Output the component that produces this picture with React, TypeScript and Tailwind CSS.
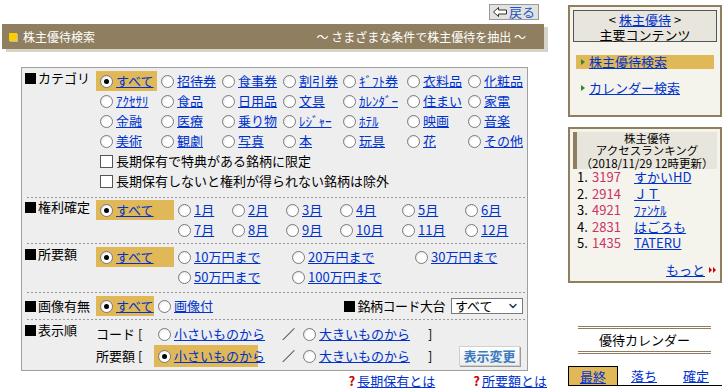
import { ChevronDown } from 'lucide-react'

const cats = [
  ['すべて', '招待券', '食事券', '割引券', 'ｷﾞﾌﾄ券', '衣料品', '化粧品'],
  ['ｱｸｾｻﾘ', '食品', '日用品', '文具', 'ｶﾚﾝﾀﾞｰ', '住まい', '家電'],
  ['金融', '医療', '乗り物', 'ﾚｼﾞｬｰ', 'ﾎﾃﾙ', '映画', '音楽'],
  ['美術', '観劇', '写真', '本', '玩具', '花', 'その他'],
]

const ranking = [
  ['1.', '3197', 'すかいHD'],
  ['2.', '2914', 'ＪＴ'],
  ['3.', '4921', 'ﾌｧﾝｹﾙ'],
  ['4.', '2831', 'はごろも'],
  ['5.', '1435', 'TATERU'],
]

function Radio({ on }: { on?: boolean }) {
  return (
    <span className="inline-flex h-[13px] w-[13px] shrink-0 items-center justify-center rounded-full border border-[#7b7b7b] bg-[radial-gradient(circle_at_60%_60%,#ffffff_45%,#d6d6d6_100%)]">
      {on && <span className="h-[5px] w-[5px] rounded-full bg-black" />}
    </span>
  )
}

function Opt({ label, on, hl }: { label: string; on?: boolean; hl?: boolean }) {
  return (
    <div
      className={`flex h-full items-center gap-[3px] whitespace-nowrap pl-[4px] ${hl ? 'bg-[#e0b858]' : ''}`}
    >
      <Radio on={on} />
      <a className="text-[#0033cc] underline">{label}</a>
    </div>
  )
}

function Square() {
  return <span className="mr-[2px] inline-block h-[11px] w-[11px] shrink-0 bg-black" />
}

function Label({ text }: { text: string }) {
  return (
    <div className="flex h-[14px] w-[71px] shrink-0 items-center whitespace-nowrap leading-[14px]">
      <Square />
      {text}
    </div>
  )
}

function Sep() {
  return <div className="mx-[2px] h-px bg-[repeating-linear-gradient(to_right,#9a9a9a_0_2px,transparent_2px_4px)]" />
}

function Check({ text }: { text: string }) {
  return (
    <div className="col-span-7 flex h-[20px] items-center gap-[3px] pl-[4px]">
      <span className="h-[13px] w-[13px] border border-[#555] bg-white" />
      <span>{text}</span>
    </div>
  )
}

function Triangle({ color }: { color: string }) {
  return (
    <svg width="4" height="6" viewBox="0 0 4 6" className="shrink-0">
      <polygon points="0,0 4,3 0,6" fill={color} />
    </svg>
  )
}

export default function App() {
  return (
    <div className="flex h-[392px] w-[726px] bg-white font-['Noto_Sans_CJK_JP',sans-serif] text-[13px] text-black">
      {/* main column */}
      <div className="w-[548px] shrink-0">
        <div className="flex h-[24px] justify-end pr-[9px] pt-[4px]">
          <div className="flex h-[16px] items-center gap-[2px] border border-[#999] bg-[#e2e2de] px-[3px] leading-[14px]">
            <svg width="14" height="10" viewBox="0 0 14 10">
              <polygon points="0.5,5 5.5,0.5 5.5,3 13.5,3 13.5,7 5.5,7 5.5,9.5" fill="#fff" stroke="#333" />
            </svg>
            <span className="text-[#2255cc]">戻る</span>
          </div>
        </div>

        <div className="ml-[2px] flex h-[25px] w-[542px] items-center justify-between bg-[#8f7f60] pl-[7px] pr-[18px] text-[12px] text-white shadow-[4px_3px_0_#d6d3c9]">
          <div className="flex items-center gap-[6px]">
            <span className="h-[8px] w-[8px] bg-[#ffcc00] shadow-[1px_1px_0_#bbb]" />
            <span>株主優待検索</span>
          </div>
          <span>～ さまざまな条件で株主優待を抽出 ～</span>
        </div>

        <div className="ml-[21px] mt-[18px] h-[304px] w-[507px] border border-[#a0a0a0] bg-[#eeeeee] pl-[3px]">
          {/* カテゴリ */}
          <div className="flex pb-[6px] pt-[3px]">
            <Label text="カテゴリ" />
            <div className="grid auto-rows-[20px] grid-cols-[61px_61px_61px_60px_64px_61px_60px]">
              {cats.flatMap((row, r) =>
                row.map((c, i) => <Opt key={c} label={c} on={r === 0 && i === 0} hl={r === 0 && i === 0} />),
              )}
              <Check text="長期保有で特典がある銘柄に限定" />
              <Check text="長期保有しないと権利が得られない銘柄は除外" />
            </div>
          </div>
          <Sep />

          {/* 権利確定 */}
          <div className="flex pb-[3px] pt-[2px]">
            <Label text="権利確定" />
            <div className="grid auto-rows-[20px] grid-cols-[78px_54px_54px_54px_62px_63px_auto]">
              <Opt label="すべて" on hl />
              {['1月', '2月', '3月', '4月', '5月', '6月'].map((m) => (
                <Opt key={m} label={m} />
              ))}
              <div />
              {['7月', '8月', '9月', '10月', '11月', '12月'].map((m) => (
                <Opt key={m} label={m} />
              ))}
            </div>
          </div>
          <Sep />

          {/* 所要額 */}
          <div className="flex pb-[5px] pt-[3px]">
            <Label text="所要額" />
            <div className="grid auto-rows-[20px] grid-cols-[78px_114px_123px_auto]">
              <Opt label="すべて" on hl />
              <Opt label="10万円まで" />
              <Opt label="20万円まで" />
              <Opt label="30万円まで" />
              <div />
              <Opt label="50万円まで" />
              <Opt label="100万円まで" />
            </div>
          </div>
          <Sep />

          {/* 画像有無 */}
          <div className="flex h-[26px] items-center pb-[3px] pt-[3px] pr-[4px]">
            <Label text="画像有無" />
            <div className="h-[20px] w-[58px]">
              <Opt label="すべて" on hl />
            </div>
            <div className="h-[20px]">
              <Opt label="画像付" />
            </div>
            <div className="ml-auto flex items-center gap-[6px]">
              <span className="flex items-center whitespace-nowrap tracking-[-0.5px]">
                <Square />
                銘柄コード大台
              </span>
              <div className="flex h-[16px] w-[72px] items-center justify-between border border-[#7a7a7a] bg-white px-[3px] leading-[14px]">
                すべて
                <ChevronDown size={12} strokeWidth={3} className="text-[#1f3b5c]" />
              </div>
            </div>
          </div>
          <Sep />

          {/* 表示順 */}
          <div className="flex pt-[3px]">
            <Label text="表示順" />
            <div className="flex-1">
              <div className="flex h-[22px] items-center">
                <span className="w-[58px] whitespace-nowrap">コード [</span>
                <div className="h-full w-[104px]">
                  <Opt label="小さいものから" />
                </div>
                <span className="ml-[24px] w-[17px]">／</span>
                <div className="h-full w-[125px]">
                  <Opt label="大きいものから" />
                </div>
                <span className="ml-[4px]">]</span>
              </div>
              <div className="flex h-[22px] items-center">
                <span className="w-[58px] whitespace-nowrap">所要額 [</span>
                <div className="h-full w-[104px]">
                  <Opt label="小さいものから" on hl />
                </div>
                <span className="ml-[24px] w-[17px]">／</span>
                <div className="h-full w-[125px]">
                  <Opt label="大きいものから" />
                </div>
                <span className="ml-[4px]">]</span>
                <button className="ml-auto mr-[7px] flex h-[20px] w-[61px] items-center justify-center border border-[#d0d0d0] bg-[linear-gradient(#ffffff,#eeeeee)] font-bold text-[#3a7cc0] shadow-[1px_1px_0_#9a9a9a]">
                  表示変更
                </button>
              </div>
            </div>
          </div>
        </div>

        <div className="mt-[2px] flex justify-end gap-[38px] pr-[1px] leading-[16px]">
          <a className="flex items-center gap-[2px]">
            <span className="font-bold text-[#cc0000]">?</span>
            <span className="text-[#0033cc] underline">長期保有とは</span>
          </a>
          <a className="flex items-center gap-[2px]">
            <span className="font-bold text-[#cc0000]">?</span>
            <span className="text-[#0033cc] underline">所要額とは</span>
          </a>
        </div>
      </div>

      {/* sidebar */}
      <div className="ml-[20px] w-[154px] shrink-0">
        <div className="mt-[5px] h-[112px] border-2 border-[#8f7f60] bg-[#f4f4ec] px-[3px] pt-[3px]">
          <div className="h-[32px] border border-[#555] bg-[#e8e6dc] pt-[1px] text-center leading-[15px]">
            <div>
              &lt; <a className="text-[#0033cc] underline">株主優待</a> &gt;
            </div>
            <div>主要コンテンツ</div>
          </div>
          <div className="mx-[3px] mt-[13px] flex h-[14px] items-center gap-[4px] bg-[#e0b858] pl-[5px] leading-[14px]">
            <Triangle color="#2a8a2a" />
            <a className="text-[#0033cc] underline">株主優待検索</a>
          </div>
          <div className="mx-[3px] mt-[12px] flex h-[14px] items-center gap-[4px] pl-[5px] leading-[14px]">
            <Triangle color="#2a8a2a" />
            <a className="text-[#0033cc] underline">カレンダー検索</a>
          </div>
        </div>

        <div className="mt-[10px] h-[156px] border-2 border-[#8f7f60] bg-[#f4f4ec] px-[3px] pt-[3px]">
          <div className="h-[37px] border-l-4 border-[#8f7f60] bg-[#e8e6dc] text-center text-[11.5px] leading-[12.3px]">
            <div>株主優待</div>
            <div>アクセスランキング</div>
            <div className="whitespace-nowrap">（2018/11/29 12時更新）</div>
          </div>
          {ranking.map(([n, code, name]) => (
            <div key={code} className="flex h-[16.5px] items-center pl-[4px] leading-[16px]">
              <span className="w-[15px]">{n}</span>
              <span className="w-[42px] text-[#cc3366]">{code}</span>
              <a className="text-[#0033cc] underline">{name}</a>
            </div>
          ))}
          <div className="mt-[11px] flex h-[14px] items-center justify-end gap-[4px] leading-[14px]">
            <a className="text-[#0033cc] underline">もっと</a>
            <svg width="8" height="6" viewBox="0 0 8 6">
              <polygon points="0,0 3,3 0,6" fill="#cc0000" />
              <polygon points="4,0 7,3 4,6" fill="#cc0000" />
            </svg>
          </div>
        </div>

        <div className="ml-[10px] mt-[43px] w-[133px] border-y-[3px] border-double border-[#8f7f60] text-center leading-[22px]">
          優待カレンダー
        </div>

        <div className="mt-[12px] flex h-[20px] border-b border-black leading-[19px]">
          <div className="w-[50px] border border-b-0 border-black bg-[#e0b858] text-center">
            <a className="text-[#0033cc] underline">最終</a>
          </div>
          <div className="w-[52px] text-center">
            <a className="text-[#0033cc] underline">落ち</a>
          </div>
          <div className="w-[52px] text-center">
            <a className="text-[#0033cc] underline">確定</a>
          </div>
        </div>
      </div>
    </div>
  )
}
